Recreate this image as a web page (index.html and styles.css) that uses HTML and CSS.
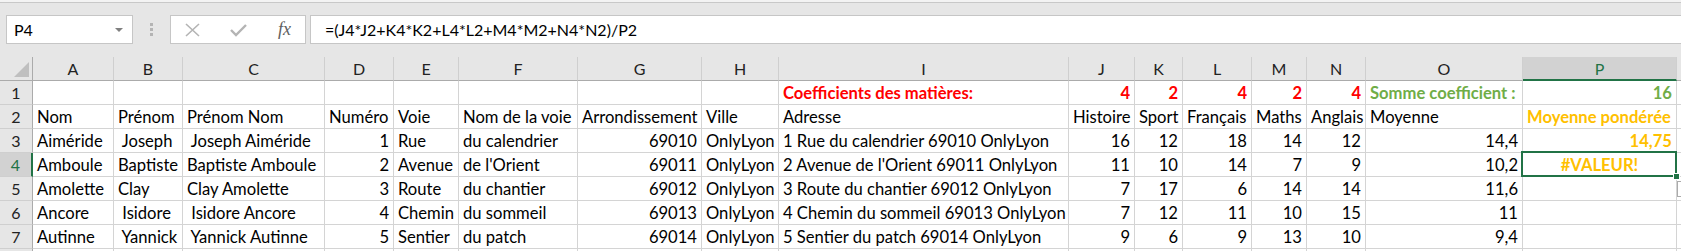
FILE: index.html
```html
<!DOCTYPE html>
<html lang="fr">
<head>
  <meta charset="UTF-8" />
  <title>Classeur - notes</title>
  <link rel="stylesheet" href="styles.css">
</head>
<body>
  <div class="formula-bar">
    <div class="name-box">
      <span>P4</span>
      <span class="drop"></span>
    </div>
    <div class="grip"><i></i><i></i><i></i></div>
    <div class="fx-box">
      <svg class="ic" width="18" height="14" viewBox="0 0 18 14"><path d="M2 1 L15 13 M15 1 L2 13" stroke="#b4b4b4" stroke-width="1.6" fill="none"/></svg>
      <svg class="ic" width="20" height="14" viewBox="0 0 20 14"><path d="M2 7 L7 12 L17 2" stroke="#b4b4b4" stroke-width="2.4" fill="none"/></svg>
      <span class="fx">fx</span>
    </div>
    <div class="formula">=(J4*J2+K4*K2+L4*L2+M4*M2+N4*N2)/P2</div>
  </div>

  <div class="sheet">
    <div class="corner"><span></span></div>
    <div class="ch">A</div><div class="ch">B</div><div class="ch">C</div><div class="ch">D</div>
    <div class="ch">E</div><div class="ch">F</div><div class="ch">G</div><div class="ch">H</div>
    <div class="ch">I</div><div class="ch">J</div><div class="ch">K</div><div class="ch">L</div>
    <div class="ch">M</div><div class="ch">N</div><div class="ch">O</div><div class="ch on">P</div>
    <div class="ch"></div>

    <!-- 1 -->
    <div class="rh">1</div>
    <div class="c"></div><div class="c"></div><div class="c"></div><div class="c"></div>
    <div class="c"></div><div class="c"></div><div class="c"></div><div class="c"></div>
    <div class="c red">Coefficients des matières:</div>
    <div class="c n red">4</div><div class="c n red">2</div><div class="c n red">4</div>
    <div class="c n red">2</div><div class="c n red">4</div>
    <div class="c green">Somme coefficient :</div>
    <div class="c n green">16</div>
    <div class="c"></div>

    <!-- 2 -->
    <div class="rh">2</div>
    <div class="c">Nom</div><div class="c">Prénom</div><div class="c">Prénom Nom</div>
    <div class="c">Numéro</div><div class="c">Voie</div><div class="c">Nom de la voie</div>
    <div class="c">Arrondissement</div><div class="c">Ville</div><div class="c">Adresse</div>
    <div class="c">Histoire</div><div class="c">Sport</div><div class="c">Français</div>
    <div class="c">Maths</div><div class="c">Anglais</div><div class="c">Moyenne</div>
    <div class="c gold">Moyenne pondérée</div>
    <div class="c"></div>

    <!-- 3 -->
    <div class="rh">3</div>
    <div class="c">Aiméride</div><div class="c"> Joseph</div><div class="c"> Joseph Aiméride</div>
    <div class="c n">1</div><div class="c">Rue</div><div class="c">du calendrier</div>
    <div class="c n">69010</div><div class="c">OnlyLyon</div><div class="c">1 Rue du calendrier 69010 OnlyLyon</div>
    <div class="c n">16</div><div class="c n">12</div><div class="c n">18</div>
    <div class="c n">14</div><div class="c n">12</div><div class="c n">14,4</div>
    <div class="c n gold">14,75</div>
    <div class="c"></div>

    <!-- 4 -->
    <div class="rh on">4</div>
    <div class="c">Amboule</div><div class="c">Baptiste</div><div class="c">Baptiste Amboule</div>
    <div class="c n">2</div><div class="c">Avenue</div><div class="c">de l'Orient</div>
    <div class="c n">69011</div><div class="c">OnlyLyon</div><div class="c">2 Avenue de l'Orient 69011 OnlyLyon</div>
    <div class="c n">11</div><div class="c n">10</div><div class="c n">14</div>
    <div class="c n">7</div><div class="c n">9</div><div class="c n">10,2</div>
    <div class="c mid gold sel">#VALEUR!<span class="handle"></span></div>
    <div class="c"></div>

    <!-- 5 -->
    <div class="rh">5</div>
    <div class="c">Amolette</div><div class="c">Clay</div><div class="c">Clay Amolette</div>
    <div class="c n">3</div><div class="c">Route</div><div class="c">du chantier</div>
    <div class="c n">69012</div><div class="c">OnlyLyon</div><div class="c">3 Route du chantier 69012 OnlyLyon</div>
    <div class="c n">7</div><div class="c n">17</div><div class="c n">6</div>
    <div class="c n">14</div><div class="c n">14</div><div class="c n">11,6</div>
    <div class="c"></div>
    <div class="c"><span class="opt"></span></div>

    <!-- 6 -->
    <div class="rh">6</div>
    <div class="c">Ancore</div><div class="c"> Isidore</div><div class="c"> Isidore Ancore</div>
    <div class="c n">4</div><div class="c">Chemin</div><div class="c">du sommeil</div>
    <div class="c n">69013</div><div class="c">OnlyLyon</div><div class="c">4 Chemin du sommeil 69013 OnlyLyon</div>
    <div class="c n">7</div><div class="c n">12</div><div class="c n">11</div>
    <div class="c n">10</div><div class="c n">15</div><div class="c n">11</div>
    <div class="c"></div>
    <div class="c"></div>

    <!-- 7 -->
    <div class="rh">7</div>
    <div class="c">Autinne</div><div class="c"> Yannick</div><div class="c"> Yannick Autinne</div>
    <div class="c n">5</div><div class="c">Sentier</div><div class="c">du patch</div>
    <div class="c n">69014</div><div class="c">OnlyLyon</div><div class="c">5 Sentier du patch 69014 OnlyLyon</div>
    <div class="c n">9</div><div class="c n">6</div><div class="c n">9</div>
    <div class="c n">13</div><div class="c n">10</div><div class="c n">9,4</div>
    <div class="c"></div>
    <div class="c"></div>

    <!-- 8 (only the top edge shows) -->
    <div class="rh"></div>
    <div class="c"></div><div class="c"></div><div class="c"></div><div class="c"></div>
    <div class="c"></div><div class="c"></div><div class="c"></div><div class="c"></div>
    <div class="c"></div><div class="c"></div><div class="c"></div><div class="c"></div>
    <div class="c"></div><div class="c"></div><div class="c"></div><div class="c"></div>
    <div class="c"></div>
  </div>
</body>
</html>
```

FILE: styles.css
```css
* {
  box-sizing: border-box;
}
body {
  margin: 0;
  background: #fff;
  font-family: Lato, "Liberation Sans", sans-serif;
  font-size: 16px;
  color: #000;
  overflow: hidden;
}

/* formula bar */
.formula-bar {
  height: 57px;
  background: #e6e6e6;
  border-top: 2px solid #f3f3f3;
  box-shadow: inset 0 1px 0 #c8c8c8;
  display: flex;
  align-items: flex-start;
  padding: 13px 0 0 6px;
}
.name-box {
  width: 127px;
  height: 29px;
  background: #fff;
  border: 1px solid #c6c6c6;
  display: flex;
  align-items: center;
  justify-content: space-between;
  padding: 0 9px 0 7px;
  font-size: 16px;
}
.drop {
  width: 0;
  height: 0;
  border-left: 4px solid transparent;
  border-right: 4px solid transparent;
  border-top: 4px solid #808080;
}
.grip {
  width: 37px;
  height: 29px;
  display: flex;
  flex-direction: column;
  align-items: center;
  justify-content: center;
  gap: 2px;
}
.grip i {
  width: 3px;
  height: 3px;
  background: #b4b4b4;
}
.fx-box {
  width: 136px;
  height: 29px;
  background: #fff;
  border: 1px solid #c6c6c6;
  display: flex;
  align-items: center;
  padding: 0 0 0 13px;
  gap: 27px;
}
.fx {
  font-family: "Liberation Serif", serif;
  font-style: italic;
  font-size: 18px;
  color: #606060;
  margin-left: 2px;
}
.formula {
  flex: 1;
  height: 29px;
  margin-left: 4px;
  background: #fff;
  border: 1px solid #c6c6c6;
  border-right: none;
  padding: 4px 0 0 14px;
  font-size: 16px;
  line-height: 20px;
}

/* grid */
.sheet {
  display: grid;
  grid-template-columns: 33px 81px 69px 142px 69px 65px 119px 124px 77px 290px 66px 48px 69px 55px 59px 157px 154px 1fr;
  grid-auto-rows: 24px;
  font-size: 16.6px;
}
.corner, .ch, .rh {
  background: #e6e6e6;
  color: #222;
  font-size: 16px;
}
.corner {
  border-right: 1px solid #ababab;
  border-bottom: 1px solid #ababab;
  position: relative;
}
.corner span {
  position: absolute;
  right: 3px;
  bottom: 3px;
  width: 0;
  height: 0;
  border-left: 15px solid transparent;
  border-bottom: 15px solid #bfbfbf;
}
.ch {
  border-right: 1px solid #cfcfcf;
  border-bottom: 1px solid #ababab;
  text-align: center;
  line-height: 24px;
}
.rh {
  border-right: 1px solid #ababab;
  border-bottom: 1px solid #cfcfcf;
  text-align: center;
  line-height: 24px;
}
.ch.on {
  background: #d2d2d2;
  color: #217346;
  border-bottom: 2px solid #217346;
}
.rh.on {
  background: #d2d2d2;
  color: #217346;
  border-right: 2px solid #217346;
}
.c {
  border-right: 1px solid #d4d4d4;
  border-bottom: 1px solid #d4d4d4;
  padding: 0 4px;
  line-height: 25px;
  white-space: pre;
  overflow: hidden;
}
.n {
  text-align: right;
}
.mid {
  text-align: center;
}
.red {
  color: #ff0000;
  font-weight: 700;
}
.green {
  color: #70ad47;
  font-weight: 700;
}
.gold {
  color: #ffc000;
  font-weight: 700;
}
.sel {
  position: relative;
  overflow: visible;
}
.sel::after {
  content: "";
  position: absolute;
  left: -2px;
  top: -2px;
  right: -1px;
  bottom: -1px;
  border: 2px solid #217346;
}
.handle {
  position: absolute;
  right: -4px;
  bottom: -4px;
  width: 7px;
  height: 7px;
  background: #217346;
  border: 1px solid #fff;
  z-index: 2;
}
.c .opt {
  display: block;
  width: 8px;
  height: 16px;
  margin: 4px 0 0 -4px;
  border: 1px solid #ababab;
  border-right: none;
}
```
